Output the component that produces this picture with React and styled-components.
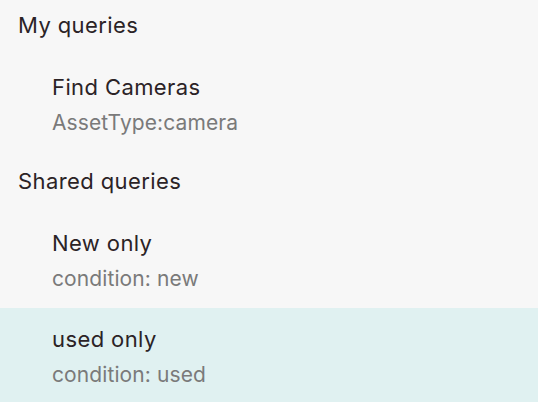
import React from 'react'
import styled, { createGlobalStyle } from 'styled-components'

const GlobalStyle = createGlobalStyle`
  html, body {
    margin: 0;
    padding: 0;
    background: #f7f7f7;
  }
  body {
    font-family: Inter, "Noto Sans", sans-serif;
    -webkit-font-smoothing: antialiased;
  }
`

const Panel = styled.div`
  width: 538px;
  height: 402px;
  overflow: hidden;
  background: #f7f7f7;
`

const Heading = styled.h3`
  margin: 0;
  padding: 16px 18px 18px;
  font-size: 22px;
  line-height: 26px;
  font-weight: 400;
  letter-spacing: 0.4px;
  color: #2b2326;

  &:first-child {
    padding-top: 12px;
  }
`

const Item = styled.div`
  display: flex;
  flex-direction: column;
  padding: 18px 18px 17px 52px;
  background: ${p => (p.$selected ? '#e0f1f1' : 'transparent')};
  cursor: pointer;
`

const Title = styled.span`
  font-size: 22px;
  line-height: 26px;
  letter-spacing: 0.4px;
  color: #2b2326;
`

const Query = styled.span`
  margin-top: 11px;
  font-size: 21px;
  line-height: 24px;
  letter-spacing: 0.1px;
  color: #7a7a7a;
`

const sections = [
  {
    title: 'My queries',
    items: [{ name: 'Find Cameras', query: 'AssetType:camera' }],
  },
  {
    title: 'Shared queries',
    items: [
      { name: 'New only', query: 'condition: new' },
      { name: 'used only', query: 'condition: used', selected: true },
    ],
  },
]

export default function App() {
  return (
    <>
      <GlobalStyle />
      <Panel>
        {sections.map(section => (
          <React.Fragment key={section.title}>
            <Heading>{section.title}</Heading>
            {section.items.map(item => (
              <Item key={item.name} $selected={item.selected}>
                <Title>{item.name}</Title>
                <Query>{item.query}</Query>
              </Item>
            ))}
          </React.Fragment>
        ))}
      </Panel>
    </>
  )
}
